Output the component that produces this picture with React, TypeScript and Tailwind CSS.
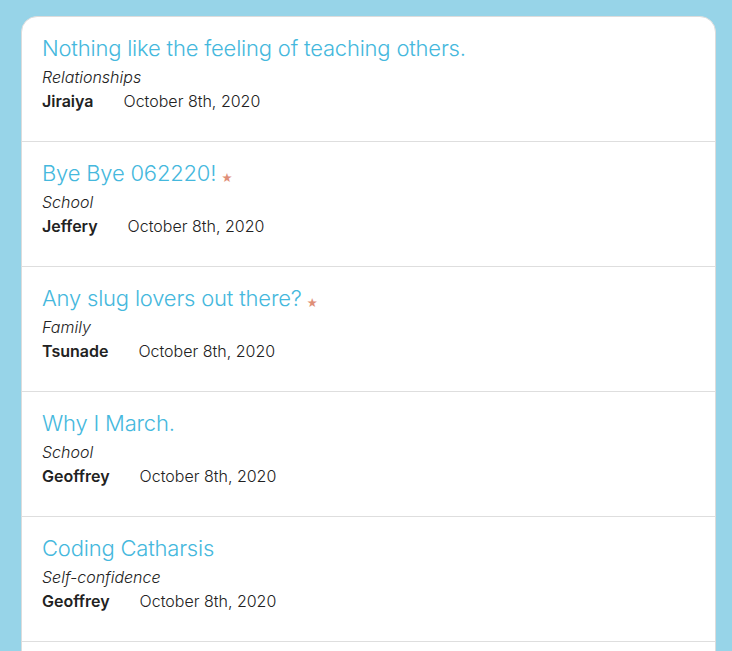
const posts = [
  { title: "Nothing like the feeling of teaching others.", category: "Relationships", author: "Jiraiya", date: "October 8th, 2020", starred: false },
  { title: "Bye Bye 062220!", category: "School", author: "Jeffery", date: "October 8th, 2020", starred: true },
  { title: "Any slug lovers out there?", category: "Family", author: "Tsunade", date: "October 8th, 2020", starred: true },
  { title: "Why I March.", category: "School", author: "Geoffrey", date: "October 8th, 2020", starred: false },
  { title: "Coding Catharsis", category: "Self-confidence", author: "Geoffrey", date: "October 8th, 2020", starred: false },
];

export default function App() {
  return (
    <div className="h-[651px] overflow-hidden bg-[#97d4e8] pl-[21px] pr-[16px] pt-[16px] font-['Inter',sans-serif]">
      <ul className="overflow-hidden rounded-t-[16px] border border-[#dcdcdc] bg-white">
        {posts.map((p) => (
          <li key={p.title} className="h-[125px] border-b border-[#dedede] px-5 pt-[17px]">
            <div className="whitespace-nowrap leading-[28px]">
              <span className="text-[22px] font-light tracking-[-0.2px] text-[#45b8dd]">{p.title}</span>
              {p.starred && (
                <span className="relative top-[1px] ml-[5px] text-[11px] leading-none text-[#df8f78]">★</span>
              )}
            </div>
            <p className="mt-[1px] text-[16px] font-light italic leading-[24px] text-[#222]">{p.category}</p>
            <p className="flex text-[16px] leading-[24px] text-[#222]">
              <span className="mr-[30px] font-semibold">{p.author}</span>
              <span className="font-light">{p.date}</span>
            </p>
          </li>
        ))}
        <li className="h-[40px]" />
      </ul>
    </div>
  );
}
